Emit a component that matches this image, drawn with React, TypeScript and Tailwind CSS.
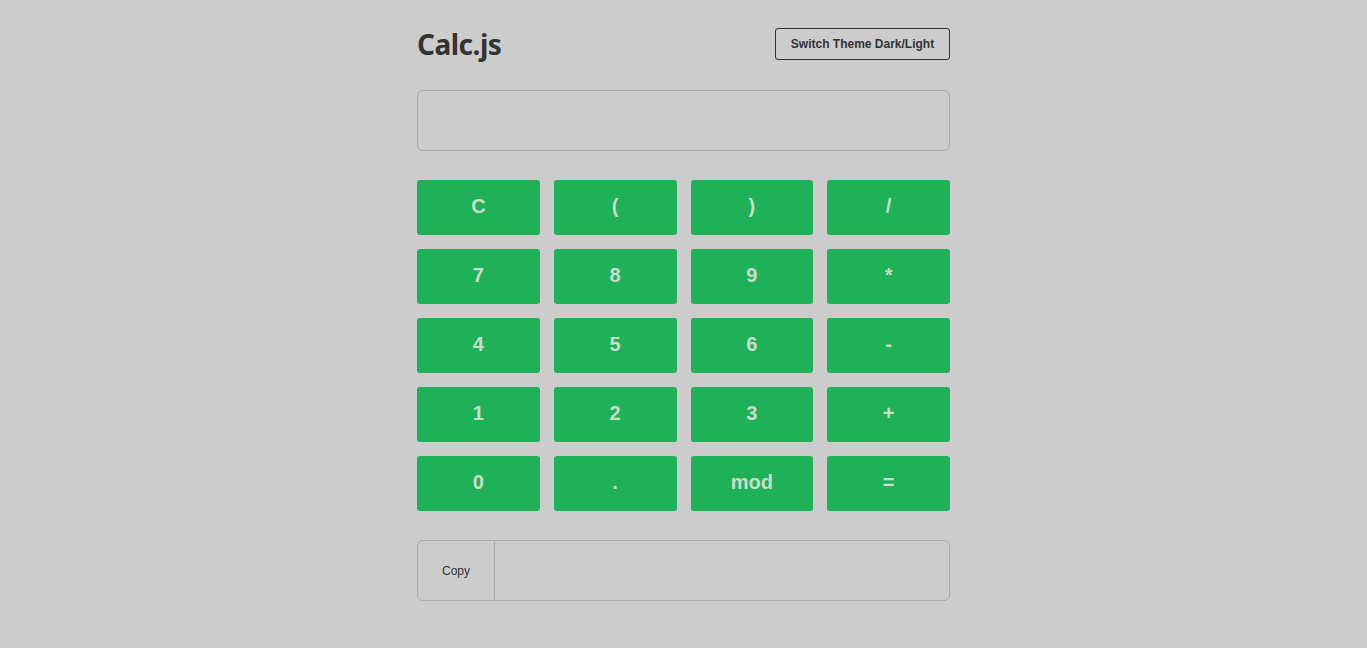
const keys = ['C', '(', ')', '/', '7', '8', '9', '*', '4', '5', '6', '-', '1', '2', '3', '+', '0', '.', 'mod', '='];

export default function App() {
  return (
    <div className="min-h-screen w-full bg-[#cccccc] font-['Liberation_Sans',Arial,sans-serif]">
      <div className="mx-auto w-[533px] pt-[28px]">
        <div className="flex items-center justify-between h-[32px]">
          <h1 className="font-['Noto_Sans',sans-serif] text-[28px] font-bold text-[#333] leading-none tracking-[-0.5px]">
            Calc.js
          </h1>
          <button className="h-[32px] w-[175px] rounded-[3px] border border-[#333] text-[12px] font-bold text-[#333]">
            Switch Theme Dark/Light
          </button>
        </div>

        <div className="mt-[30px] h-[61px] rounded-[6px] border border-[#aaaaaa]"></div>

        <div className="mt-[29px] grid grid-cols-4 gap-[14px]">
          {keys.map((k) => (
            <button
              key={k}
              className="h-[55px] rounded-[3px] bg-[#1eb157] pb-[3px] text-[20px] font-bold text-[#cbdccf]"
            >
              {k}
            </button>
          ))}
        </div>

        <div className="mt-[29px] flex h-[61px] rounded-[6px] border border-[#aaaaaa]">
          <div className="flex w-[77px] items-center justify-center border-r border-[#aaaaaa] text-[12px] text-[#333]">
            Copy
          </div>
          <div className="flex-1"></div>
        </div>
      </div>
    </div>
  );
}
